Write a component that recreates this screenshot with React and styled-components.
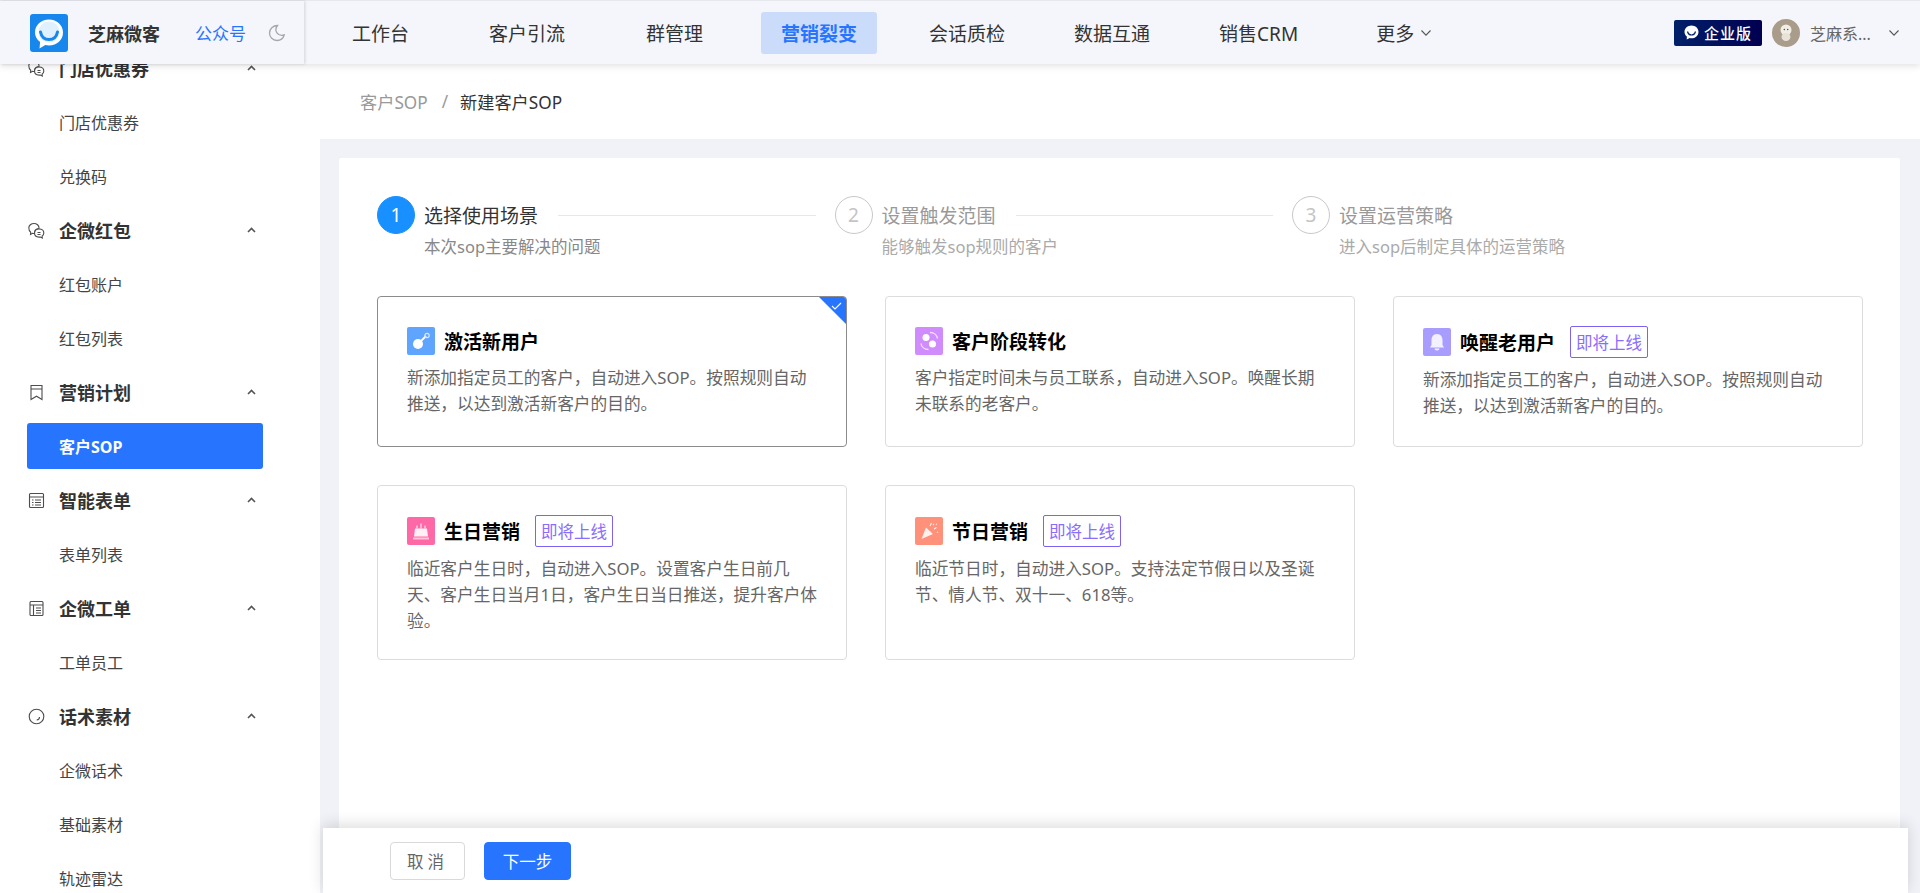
import React from 'react';
import styled, { createGlobalStyle } from 'styled-components';

const FONT = '"Noto Sans", "Noto Sans CJK SC", sans-serif';

const GlobalStyle = createGlobalStyle`
  html, body {
    margin: 0;
    padding: 0;
    height: 100%;
    overflow: hidden;
    background: #fff;
    font-family: ${FONT};
  }
  #root { height: 100%; }
  * { box-sizing: border-box; }
`;

/* ---------- icons ---------- */
const Logo = () => (
  <svg width="38" height="38" viewBox="0 0 38 38">
    <rect width="38" height="38" rx="3" fill="#1787ee" />
    <path d="M19 5.500c8 0 14 5.600 14 13s-6 13-14 13c-1.300 0-2.500-.2-3.700-.4L9.500 34.500l.6-6.400C6.800 25.700 5 22.300 5 18.500c0-7.400 6-13 14-13z" fill="#fff" />
    <circle cx="19" cy="18" r="10.500" fill="#dff0ff" />
    <path d="M10.500 18c1 5 4.500 7.500 8.500 7.500s7.500-2.500 8.500-7.500" fill="none" stroke="#1787ee" strokeWidth="3" strokeLinecap="round" />
  </svg>
);

const Moon = () => (
  <svg width="18" height="18" viewBox="0 0 18 18" fill="none" stroke="#a4a6ad" strokeWidth="1.300">
    <path d="M9.500 1.500c-2 2.500-2 5.300-.6 7.300 1.500 2.100 4.300 3 7.300 2.200-1 3.300-4 5.500-7.200 5.500C4.800 16.500 1.500 13.200 1.500 9c0-4 3.500-7.500 8-7.500z" />
  </svg>
);

const Chevron = ({ size = 10, color = '#555' }) => (
  <svg width={size} height={size * 0.6} viewBox="0 0 10 6" fill="none" stroke={color} strokeWidth="1.100">
    <path d="M.5.500 5 5.200 9.500.500" />
  </svg>
);

const Caret = () => (
  <svg width="9" height="6" viewBox="0 0 9 6" fill="none" stroke="#555" strokeWidth="1.600">
    <path d="M1 5 4.500 1.500 8 5" />
  </svg>
);

const ChatGlyph = () => (
  <svg width="15" height="15" viewBox="0 0 15 15">
    <path d="M7.500.500c3.900 0 7 2.800 7 6.400s-3.100 6.400-7 6.400c-.6 0-1.200-.1-1.700-.2L2.700 14.500l.2-3C1.400 10.300.5 8.700.5 6.900.5 3.300 3.600.500 7.500.500z" fill="#fff" />
    <path d="M3.500 6.500c.6 2.400 2.200 3.500 4 3.500s3.400-1.100 4-3.500" fill="none" stroke="#00206a" strokeWidth="1.200" />
  </svg>
);

const Avatar = () => (
  <svg width="28" height="28" viewBox="0 0 28 28">
    <circle cx="14" cy="14" r="14" fill="#a99c8a" />
    <circle cx="14" cy="11" r="5.500" fill="#f1eee6" />
    <ellipse cx="14" cy="18" rx="4.500" ry="4" fill="#e8e3d8" />
    <circle cx="12.300" cy="10.500" r=".7" fill="#4a4238" />
    <circle cx="15.700" cy="10.500" r=".7" fill="#4a4238" />
  </svg>
);

const stroke = { fill: 'none', stroke: '#4d4d4d', strokeWidth: 1.100 };

const CouponIcon = () => (
  <svg width="17" height="17" viewBox="0 0 17 17" {...stroke}>
    <path d="M6 1.500c2.800 0 5 2 5 4.300 0 .3 0 .5-.1.700-2.600.2-4.400 2-4.400 4.200v.8H6c-.5 0-1-.1-1.500-.2L2.500 12.500l.2-2.300C1.500 9.300.8 7.700.8 5.800c0-2.300 2.400-4.300 5.200-4.300z" />
    <path d="M11 7c2.800 0 4.800 1.700 4.800 4 0 1.300-.7 2.400-1.700 3.100l.2 1.900-1.900-1c-.4.100-.9.100-1.400.1-2.600 0-4.500-1.700-4.500-4s1.900-4.100 4.500-4.100z" />
    <path d="M9.500 10.500h3M9.500 12.500h3" />
  </svg>
);

const BookmarkIcon = () => (
  <svg width="17" height="17" viewBox="0 0 17 17" {...stroke}>
    <path d="M3 1.500h11v14l-5.500-3.300L3 15.500zM3 5h11" />
  </svg>
);

const FormIcon = () => (
  <svg width="17" height="17" viewBox="0 0 17 17" {...stroke}>
    <rect x="1.500" y="1.500" width="14" height="14" rx="1" />
    <path d="M1.500 5h14M4 8h1.500M7 8h6M4 10.500h1.500M7 10.500h6M4 13h1.500M7 13h6" />
  </svg>
);

const TicketIcon = () => (
  <svg width="17" height="17" viewBox="0 0 17 17" {...stroke}>
    <rect x="2" y="1.500" width="13" height="14" rx="1" />
    <path d="M2 5h13M5.500 5v10.500M8 8h5M8 10.500h5M8 13h5" />
  </svg>
);

const TalkIcon = () => (
  <svg width="17" height="17" viewBox="0 0 17 17" {...stroke}>
    <circle cx="8.500" cy="8.500" r="7.300" />
    <path d="M11.500 9c0 1.700-1 2.800-2.800 3" />
  </svg>
);

const KeyIcon = () => (
  <svg width="28" height="28" viewBox="0 0 28 28">
    <rect width="28" height="28" rx="2" fill="#5fa4ff" />
    <circle cx="11" cy="17" r="5" fill="#fff" />
    <path d="m14 14 5-5" stroke="#fff" strokeWidth="1.800" />
    <circle cx="20" cy="8.500" r="2.200" fill="none" stroke="#d5e6ff" strokeWidth="1.200" />
  </svg>
);

const TransferIcon = () => (
  <svg width="28" height="28" viewBox="0 0 28 28">
    <rect width="28" height="28" rx="2" fill="#d08cfd" />
    <circle cx="11" cy="10.500" r="3.500" fill="#fff" />
    <circle cx="17.500" cy="17" r="3.500" fill="#fff" />
    <path d="M6 16.500c.5 3.500 3.500 6 7.500 6M22.500 11.500C22 8 19 5.500 15 5.500" fill="none" stroke="#f3dfff" strokeWidth="1.400" />
  </svg>
);

const BellIcon = () => (
  <svg width="28" height="28" viewBox="0 0 28 28">
    <rect width="28" height="28" rx="2" fill="#a89dff" />
    <path d="M14 6c3.600 0 5.500 2.800 5.500 6v5l1.500 2.500H7L8.500 17v-5c0-3.200 1.900-6 5.500-6z" fill="#f3f1ff" />
    <path d="M11.500 20.500h5c0 1.300-1.100 2-2.500 2s-2.500-.7-2.500-2z" fill="#f3f1ff" />
  </svg>
);

const CakeIcon = () => (
  <svg width="28" height="28" viewBox="0 0 28 28">
    <rect width="28" height="28" rx="2" fill="#ff68a7" />
    <path d="M8 11.500h12l1 8H7z" fill="#fff0f6" />
    <rect x="6" y="20.500" width="16" height="2" fill="#ffc3dc" />
    <path d="M10 8.500v3M14 6.500v5M18 8.500v3" stroke="#fff0f6" strokeWidth="1.100" />
  </svg>
);

const PartyIcon = () => (
  <svg width="28" height="28" viewBox="0 0 28 28">
    <rect width="28" height="28" rx="2" fill="#ff9079" />
    <path d="M6.500 22 11 10.500l7 6.500z" fill="#fff0ec" />
    <path d="M15 9l1.500-3M19 12l2.500-1.500M18 8l1-1M22 15l1 .5M21 7l1 .5" stroke="#fff0ec" strokeWidth="1.100" />
  </svg>
);

/* ---------- layout ---------- */
const Page = styled.div`
  display: flex;
  flex-direction: column;
  height: 100vh;
  overflow: hidden;
`;

const Header = styled.header`
  position: relative;
  z-index: 5;
  display: flex;
  flex: none;
  height: 64px;
  background: #f5f6fb;
  border-top: 1px solid #e6e8ee;
  box-shadow: 0 2px 7px rgba(0, 0, 0, 0.12);
`;

const Brand = styled.div`
  display: flex;
  align-items: center;
  flex: none;
  width: 304px;
  padding-left: 30px;
  box-shadow: 1px 0 3px rgba(0, 0, 0, 0.14);
`;

const BrandName = styled.span`
  margin-left: 20px;
  font-size: 18px;
  font-weight: 700;
  color: #333;
`;

const BrandLink = styled.span`
  margin: 0 22px 0 35px;
  font-size: 17px;
  color: #2775ff;
`;

const Nav = styled.nav`
  display: flex;
  align-items: center;
  flex: 1;
  padding-left: 28px;
`;

const NavItem = styled.div`
  display: flex;
  align-items: center;
  gap: 7px;
  height: 42px;
  margin-left: ${(p) => p.$gap}px;
  padding: 0 20px;
  border-radius: 3px;
  font-size: 19px;
  color: #333;
  background: ${(p) => (p.$active ? '#cbdcfb' : 'transparent')};
  font-weight: ${(p) => (p.$active ? 700 : 400)};
  ${(p) => p.$active && 'color: #2775ff;'}
`;

const UserArea = styled.div`
  display: flex;
  align-items: center;
  padding-right: 21px;
`;

const Edition = styled.div`
  display: flex;
  align-items: center;
  justify-content: center;
  gap: 5px;
  width: 88px;
  height: 26px;
  margin-right: 10px;
  border-radius: 2px;
  background: linear-gradient(90deg, #00206a, #000050);
  color: #fff;
  font-size: 15px;
  font-weight: 500;
  letter-spacing: 1px;
`;

const UserName = styled.span`
  width: 79px;
  margin-left: 10px;
  font-size: 16px;
  color: #666;
`;

const Body = styled.div`
  display: flex;
  flex: 1;
  min-height: 0;
`;

const Sidebar = styled.aside`
  flex: none;
  width: 320px;
  padding-left: 27px;
  overflow: hidden;
  background: #fff;
`;

const SideList = styled.div`
  width: 236px;
  margin-top: -23px;
`;

const SideSection = styled.div`
  display: flex;
  flex-direction: column;
`;

const SideGroup = styled.div`
  display: flex;
  align-items: center;
  height: 54px;
  padding: 0 7px 0 1px;
  font-size: 18px;
  font-weight: 700;
  color: #333;

  span {
    flex: 1;
    margin-left: 14px;
  }
`;

const SideItem = styled.div`
  display: flex;
  align-items: center;
  height: 46px;
  margin: 4px 0;
  padding-left: 32px;
  border-radius: 3px;
  font-size: 16px;
  color: ${(p) => (p.$active ? '#fff' : '#444')};
  font-weight: ${(p) => (p.$active ? 700 : 400)};
  background: ${(p) => (p.$active ? '#2775ff' : 'transparent')};
`;

const Main = styled.main`
  position: relative;
  display: flex;
  flex-direction: column;
  flex: 1;
  min-width: 0;
`;

const Breadcrumb = styled.div`
  display: flex;
  align-items: center;
  flex: none;
  height: 75px;
  padding-left: 40px;
  font-size: 17.200px;
  color: #333;

  em {
    font-style: normal;
    color: #999;
  }
  i {
    margin: 0 12px 0 14px;
    font-style: normal;
    color: #999;
  }
`;

const Content = styled.div`
  flex: 1;
  min-height: 0;
  padding: 19px 20px 0 19px;
  background: #f0f2f7;
`;

const Panel = styled.section`
  height: 100%;
  padding: 38px 37px 0 38px;
  border-radius: 2px 2px 0 0;
  background: #fff;
`;

const Stepper = styled.div`
  display: grid;
  grid-template-columns: repeat(3, 457.5px);
  height: 100px;
`;

const Step = styled.div`
  display: flex;
  padding-right: 19px;
`;

const StepDot = styled.div`
  display: flex;
  align-items: center;
  justify-content: center;
  flex: none;
  width: 38px;
  height: 38px;
  border-radius: 50%;
  font-size: 19px;
  background: ${(p) => (p.$active ? '#1890ff' : '#fff')};
  color: ${(p) => (p.$active ? '#fff' : '#c4c4c4')};
  border: 1px solid ${(p) => (p.$active ? '#1890ff' : '#c8c8c8')};
`;

const StepBody = styled.div`
  flex: 1;
  margin-left: 9px;
`;

const StepTitle = styled.div`
  display: flex;
  align-items: center;
  gap: 20px;
  height: 38px;
  font-size: 19px;
  white-space: nowrap;
  color: ${(p) => (p.$active ? '#333' : '#999')};

  &::after {
    content: '';
    flex: 1;
    height: 1px;
    background: ${(p) => (p.$last ? 'transparent' : '#e8e8e8')};
  }
`;

const StepDesc = styled.div`
  margin-top: 1px;
  font-size: 16.500px;
  line-height: 24px;
  color: ${(p) => (p.$active ? '#888' : '#aaa')};
`;

const Cards = styled.div`
  display: grid;
  grid-template-columns: repeat(3, 470px);
  grid-template-rows: 151px 175px;
  gap: 38px;
`;

const Card = styled.article`
  position: relative;
  padding: 29px 27px 0 29px;
  overflow: hidden;
  border-radius: 4px;
  border: 1px solid ${(p) => (p.$selected ? '#8c8c8c' : '#dcdcdc')};
  background: #fff;
`;

const Corner = styled.div`
  position: absolute;
  top: 0;
  right: 0;
  width: 0;
  height: 0;
  border-style: solid;
  border-width: 0 27px 27px 0;
  border-color: transparent #2775ff transparent transparent;
`;

const CornerCheck = styled.svg`
  position: absolute;
  top: 5px;
  right: 4px;
`;

const CardHead = styled.div`
  display: flex;
  align-items: center;
  min-height: 30px;
`;

const CardTitle = styled.h3`
  margin: 0 0 0 9px;
  font-size: 19px;
  font-weight: 700;
  color: #000;
`;

const SoonTag = styled.span`
  display: flex;
  align-items: center;
  justify-content: center;
  width: 78px;
  height: 32px;
  margin-left: 15px;
  border: 1px solid #7b63f5;
  border-radius: 2px;
  font-size: 16.500px;
  color: #8a6dff;
`;

const CardDesc = styled.p`
  margin: 9px 0 0;
  font-size: 16.700px;
  line-height: 26px;
  color: #666;
`;

const Footer = styled.footer`
  position: absolute;
  left: 3px;
  right: 12px;
  bottom: 0;
  z-index: 3;
  display: flex;
  gap: 19px;
  height: 65px;
  padding: 14px 0 0 67px;
  background: #fff;
  box-shadow: 0 -3px 14px rgba(0, 0, 0, 0.14);
`;

const Button = styled.button`
  height: 38px;
  padding: 0;
  border-radius: 4px;
  font-family: ${FONT};
  font-size: 16.500px;
  width: ${(p) => (p.$primary ? 87 : 75)}px;
  color: ${(p) => (p.$primary ? '#fff' : '#666')};
  background: ${(p) => (p.$primary ? '#2775ff' : '#fff')};
  border: 1px solid ${(p) => (p.$primary ? '#2775ff' : '#d9d9d9')};
  letter-spacing: ${(p) => (p.$primary ? 0 : '4px')};
`;

/* ---------- data ---------- */
const navItems = [
  { label: '工作台', gap: 0 },
  { label: '客户引流', gap: 40 },
  { label: '群管理', gap: 41 },
  { label: '营销裂变', gap: 38, active: true },
  { label: '会话质检', gap: 32 },
  { label: '数据互通', gap: 29 },
  { label: '销售CRM', gap: 29 },
  { label: '更多', gap: 38, more: true },
];

const sideMenu = [
  { title: '门店优惠券', icon: <CouponIcon />, items: ['门店优惠券', '兑换码'] },
  { title: '企微红包', icon: <CouponIcon />, items: ['红包账户', '红包列表'] },
  { title: '营销计划', icon: <BookmarkIcon />, items: ['客户SOP'], active: '客户SOP' },
  { title: '智能表单', icon: <FormIcon />, items: ['表单列表'] },
  { title: '企微工单', icon: <TicketIcon />, items: ['工单员工'] },
  { title: '话术素材', icon: <TalkIcon />, items: ['企微话术', '基础素材', '轨迹雷达'] },
];

const steps = [
  { no: 1, title: '选择使用场景', desc: '本次sop主要解决的问题', active: true },
  { no: 2, title: '设置触发范围', desc: '能够触发sop规则的客户' },
  { no: 3, title: '设置运营策略', desc: '进入sop后制定具体的运营策略', last: true },
];

const scenes = [
  { title: '激活新用户', icon: <KeyIcon />, selected: true, desc: '新添加指定员工的客户，自动进入SOP。按照规则自动推送，以达到激活新客户的目的。' },
  { title: '客户阶段转化', icon: <TransferIcon />, desc: '客户指定时间未与员工联系，自动进入SOP。唤醒长期未联系的老客户。' },
  { title: '唤醒老用户', icon: <BellIcon />, soon: true, desc: '新添加指定员工的客户，自动进入SOP。按照规则自动推送，以达到激活新客户的目的。' },
  { title: '生日营销', icon: <CakeIcon />, soon: true, desc: '临近客户生日时，自动进入SOP。设置客户生日前几天、客户生日当月1日，客户生日当日推送，提升客户体验。' },
  { title: '节日营销', icon: <PartyIcon />, soon: true, desc: '临近节日时，自动进入SOP。支持法定节假日以及圣诞节、情人节、双十一、618等。' },
];

export default function App() {
  return (
    <Page>
      <GlobalStyle />
      <Header>
        <Brand>
          <Logo />
          <BrandName>芝麻微客</BrandName>
          <BrandLink>公众号</BrandLink>
          <Moon />
        </Brand>
        <Nav>
          {navItems.map((item) => (
            <NavItem key={item.label} $gap={item.gap} $active={item.active}>
              {item.label}
              {item.more && <Chevron size={10} />}
            </NavItem>
          ))}
        </Nav>
        <UserArea>
          <Edition>
            <ChatGlyph />
            企业版
          </Edition>
          <Avatar />
          <UserName>芝麻系...</UserName>
          <Chevron size={10} />
        </UserArea>
      </Header>
      <Body>
        <Sidebar>
          <SideList>
            {sideMenu.map((group) => (
              <SideSection key={group.title}>
                <SideGroup>
                  {group.icon}
                  <span>{group.title}</span>
                  <Caret />
                </SideGroup>
                {group.items.map((name) => (
                  <SideItem key={name} $active={group.active === name}>
                    {name}
                  </SideItem>
                ))}
              </SideSection>
            ))}
          </SideList>
        </Sidebar>
        <Main>
          <Breadcrumb>
            <em>客户SOP</em>
            <i>/</i>
            新建客户SOP
          </Breadcrumb>
          <Content>
            <Panel>
              <Stepper>
                {steps.map((s) => (
                  <Step key={s.no}>
                    <StepDot $active={s.active}>{s.no}</StepDot>
                    <StepBody>
                      <StepTitle $active={s.active} $last={s.last}>{s.title}</StepTitle>
                      <StepDesc $active={s.active}>{s.desc}</StepDesc>
                    </StepBody>
                  </Step>
                ))}
              </Stepper>
              <Cards>
                {scenes.map((c) => (
                  <Card key={c.title} $selected={c.selected}>
                    {c.selected && (
                      <>
                        <Corner />
                        <CornerCheck width="11" height="8" viewBox="0 0 11 8" fill="none" stroke="#fff" strokeWidth="1.100">
                          <path d="M1 4l3 3 6-6" />
                        </CornerCheck>
                      </>
                    )}
                    <CardHead>
                      {c.icon}
                      <CardTitle>{c.title}</CardTitle>
                      {c.soon && <SoonTag>即将上线</SoonTag>}
                    </CardHead>
                    <CardDesc>{c.desc}</CardDesc>
                  </Card>
                ))}
              </Cards>
            </Panel>
          </Content>
          <Footer>
            <Button>取消</Button>
            <Button $primary>下一步</Button>
          </Footer>
        </Main>
      </Body>
    </Page>
  );
}
